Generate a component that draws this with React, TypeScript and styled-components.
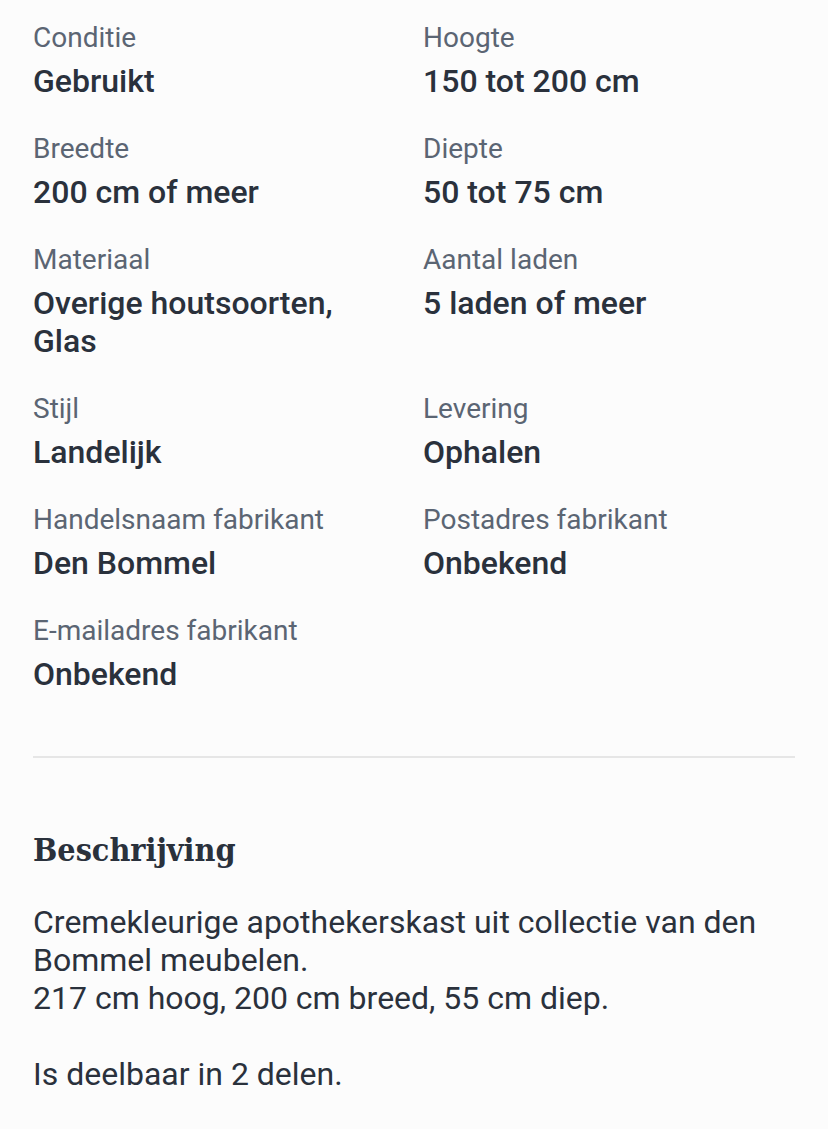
import React from 'react'
import styled, { createGlobalStyle } from 'styled-components'

interface Spec {
	label: string
	value: string
}

const specs: Spec[] = [
	{ label: 'Conditie', value: 'Gebruikt' },
	{ label: 'Hoogte', value: '150 tot 200 cm' },
	{ label: 'Breedte', value: '200 cm of meer' },
	{ label: 'Diepte', value: '50 tot 75 cm' },
	{ label: 'Materiaal', value: 'Overige houtsoorten, Glas' },
	{ label: 'Aantal laden', value: '5 laden of meer' },
	{ label: 'Stijl', value: 'Landelijk' },
	{ label: 'Levering', value: 'Ophalen' },
	{ label: 'Handelsnaam fabrikant', value: 'Den Bommel' },
	{ label: 'Postadres fabrikant', value: 'Onbekend' },
	{ label: 'E-mailadres fabrikant', value: 'Onbekend' },
]

const App: React.FC = () => {
	return (
		<>
			<GlobalStyle />
			<Page>
				<SpecGrid>
					{specs.map((s) => (
						<SpecItem key={s.label}>
							<Label>{s.label}</Label>
							<Value>{s.value}</Value>
						</SpecItem>
					))}
				</SpecGrid>
				<Divider />
				<Heading>Beschrijving</Heading>
				<Description>
					Cremekleurige apothekerskast uit collectie van den Bommel meubelen.
					<br />
					217 cm hoog, 200 cm breed, 55 cm diep.
					<br />
					<br />
					Is deelbaar in 2 delen.
				</Description>
			</Page>
		</>
	)
}

export default App

const GlobalStyle = createGlobalStyle`
	body {
		margin: 0;
		background: #fcfcfc;
		font-family: Roboto, 'Liberation Sans', sans-serif;
	}
`

const Page = styled.div`
	padding: 22px 33px 40px;
	width: 762px;
	min-height: 1067px;
`

const SpecGrid = styled.div`
	display: grid;
	grid-template-columns: 390px 1fr;
	row-gap: 33px;
`

const SpecItem = styled.div`
	display: flex;
	flex-direction: column;
	gap: 8px;
`

const Label = styled.div`
	font-size: 28px;
	line-height: 32px;
	color: #5b6573;
`

const Value = styled.div`
	font-size: 32px;
	line-height: 38px;
	font-weight: 500;
	color: #2a313c;
	max-width: 330px;
`

const Divider = styled.hr`
	margin: 63px 0 72px;
	border: 0;
	border-top: 2px solid #e6e6e6;
`

const Heading = styled.h2`
	margin: 0 0 33px;
	font-family: 'DejaVu Serif Condensed', 'DejaVu Serif', serif;
	font-size: 32px;
	line-height: 40px;
	font-weight: 700;
	color: #2a313c;
`

const Description = styled.p`
	margin: 0;
	max-width: 740px;
	font-size: 32px;
	line-height: 38px;
	color: #2a313c;
`
